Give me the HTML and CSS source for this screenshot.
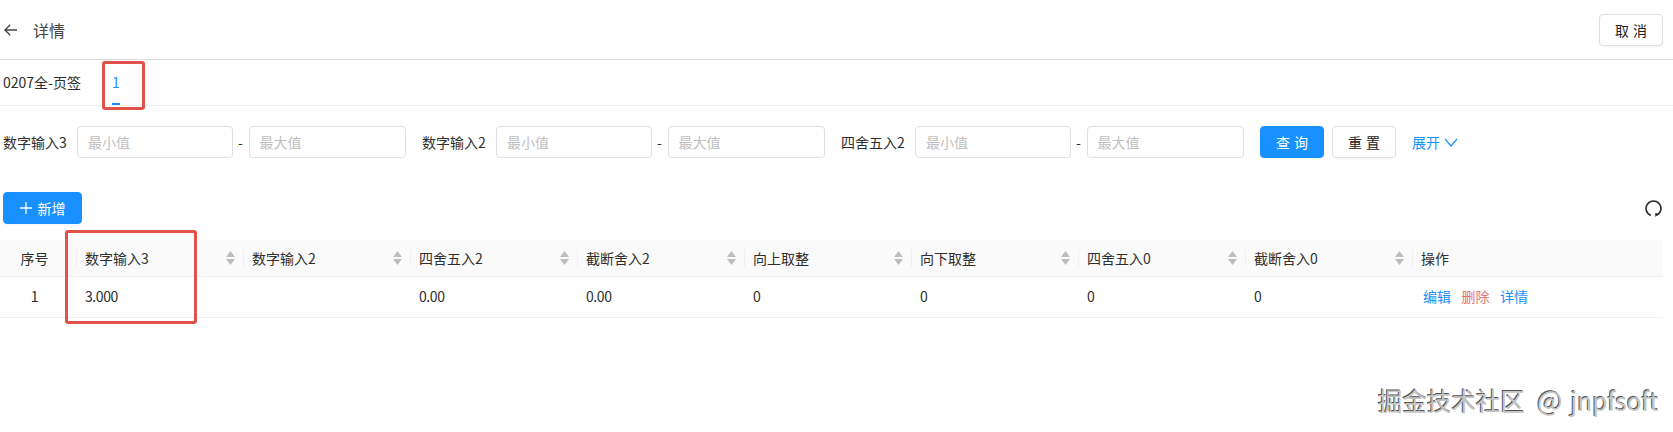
FILE: index.html
```html
<!DOCTYPE html>
<html lang="zh-CN">
<head>
<meta charset="utf-8">
<title>详情</title>
<link rel="stylesheet" href="styles.css">
</head>
<body>
<div class="page">
  <header class="head">
    <div class="head-left">
      <svg class="back" viewBox="0 0 13 12" width="13" height="12"><path d="M13 6H1.2M6.2 .8 1 6l5.2 5.2" fill="none" stroke="#444" stroke-width="1.3"/></svg>
      <span class="title">详情</span>
    </div>
    <button class="btn">取 消</button>
  </header>
  <nav class="tabs">
    <span class="tab">0207全-页签</span>
    <span class="tab active">1</span>
  </nav>
  <form class="filter">
    <div class="group"><label>数字输入3</label><span class="range"><input placeholder="最小值"><i>-</i><input placeholder="最大值"></span></div>
    <div class="group"><label>数字输入2</label><span class="range"><input placeholder="最小值"><i>-</i><input placeholder="最大值"></span></div>
    <div class="group"><label>四舍五入2</label><span class="range"><input placeholder="最小值"><i>-</i><input placeholder="最大值"></span></div>
    <div class="actions">
      <button type="button" class="btn primary">查 询</button>
      <button type="button" class="btn">重 置</button>
      <a class="link expand">展开<svg viewBox="0 0 14 9" width="14" height="9"><path d="M1 1l6 7 6-7" fill="none" stroke="#1890ff" stroke-width="1.2"/></svg></a>
    </div>
  </form>
  <div class="toolbar">
    <button class="btn primary add"><svg viewBox="0 0 12 12" width="12" height="12"><path d="M6 0v12M0 6h12" stroke="#fff" stroke-width="1.3"/></svg>新增</button>
    <svg class="refresh" viewBox="0 0 16 16" width="17" height="17"><path d="M5.5 14.5A7 7 0 1 1 10.5 14.5" fill="none" stroke="#333" stroke-width="1.6"/><path d="M9.6 16v-3.6h3.4z" fill="#333"/></svg>
  </div>
  <table class="grid">
    <colgroup>
      <col class="c-idx"><col class="c"><col class="c"><col class="c"><col class="c"><col class="c"><col class="c"><col class="c"><col class="c"><col>
    </colgroup>
    <thead>
      <tr>
        <th class="center">序号</th>
        <th class="sort">数字输入3</th>
        <th class="sort">数字输入2</th>
        <th class="sort">四舍五入2</th>
        <th class="sort">截断舍入2</th>
        <th class="sort">向上取整</th>
        <th class="sort">向下取整</th>
        <th class="sort">四舍五入0</th>
        <th class="sort">截断舍入0</th>
        <th>操作</th>
      </tr>
    </thead>
    <tbody>
      <tr>
        <td class="center">1</td>
        <td>3.000</td>
        <td></td>
        <td>0.00</td>
        <td>0.00</td>
        <td>0</td>
        <td>0</td>
        <td>0</td>
        <td>0</td>
        <td class="ops"><a class="link">编辑</a><a class="link danger">删除</a><a class="link">详情</a></td>
      </tr>
    </tbody>
  </table>
  <div class="mark mark-tab"></div>
  <div class="mark mark-col"></div>
  <div class="watermark">掘金技术社区<span class="wm-at">@</span><span class="wm-name">jnpfsoft</span></div>
</div>
</body>
</html>
```
FILE: styles.css
```css
* { box-sizing: border-box; }
html, body { margin: 0; padding: 0; background: #fff; }
body { font-family: "Noto Sans CJK SC", "Open Sans", sans-serif; font-size: 14px; color: #2e2e2e; }
.page { position: relative; width: 1673px; height: 432px; overflow: hidden; }

.head { display: flex; justify-content: space-between; align-items: center; height: 60px; padding: 0 10px 0 4px; border-bottom: 1px solid #dcdcdc; }
.head-left { display: flex; align-items: center; gap: 16px; }
.back { display: block; }
.title { font-size: 16px; color: #444; }

.btn { height: 32px; width: 64px; padding: 0; border: 1px solid #dcdfe6; border-radius: 4px; background: #fff; color: #222; font: inherit; font-size: 14px; line-height: 30px; word-spacing: 1px; box-shadow: 0 1px 2px rgba(0,0,0,.04); }
.btn.primary { background: #1890ff; border-color: #1890ff; color: #fff; }

.tabs { display: flex; height: 46px; padding-left: 3px; border-bottom: 1px solid #f0f0f0; }
.tab { line-height: 44px; margin-right: 31px; position: relative; }
.tab.active { color: #1890ff; }
.tab.active::after { content: ""; position: absolute; left: 0; right: 0; bottom: 0; height: 2px; background: #1890ff; }

.filter { display: flex; align-items: center; padding: 20px 0 0 3px; height: 52px; }
.group { display: flex; align-items: center; margin-right: 16.5px; }
.group label { width: 64px; margin-right: 10px; white-space: nowrap; }
.range { display: flex; align-items: center; }
.range i { width: 16px; text-align: center; font-style: normal; }
.range input { width: 157px; height: 32px; padding: 0 10px; border: 1px solid #dcdfe6; border-radius: 4px; font: inherit; font-size: 14px; color: #333; background: #fff; outline: none; }
.range input:first-child { width: 155.5px; }
.range input::placeholder { color: #bfbfbf; }
.actions { display: flex; align-items: center; gap: 8px; }
.link { color: #1890ff; }
.expand { display: flex; align-items: center; gap: 4px; margin-left: 8px; }

.toolbar { display: flex; justify-content: space-between; align-items: center; height: 32px; margin-top: 34px; padding: 0 11px 0 3px; }
.add { display: flex; align-items: center; justify-content: center; gap: 6px; width: 79px; }
.refresh { display: block; }

.grid { table-layout: fixed; width: 1663px; margin-top: 16px; border-collapse: collapse; }
.c-idx { width: 77px; }
.c { width: 167px; }
.grid th { position: relative; height: 36px; padding: 0 8px; background: #fafafa; border-bottom: 1px solid #f0f0f0; text-align: left; font-weight: 400; white-space: nowrap; }
.grid td { height: 41px; padding: 0 8px 2px; border-bottom: 1px solid #f0f0f0; letter-spacing: -.4px; }
.grid .center { text-align: center; }
.grid th.center, .grid td.center { padding-left: 0; }
.grid th:not(:last-child)::before { content: ""; position: absolute; right: 0; top: 9px; bottom: 9px; width: 1px; background: #f0f0f0; }
.grid th.sort::after { content: ""; position: absolute; right: 9px; top: 11px; width: 9px; height: 14px; background: #bdbdbd; clip-path: polygon(50% 0, 100% 43%, 0 43%, 0 57%, 100% 57%, 50% 100%, 0 57%, 0 43%); }
.grid td.ops { padding-left: 10px; letter-spacing: 0; }
.grid td .link { margin-right: 10.5px; }
.grid td .danger { color: #e57373; }

.mark { position: absolute; border: 3px solid #e0524a; border-radius: 3px; }
.mark-tab { left: 102px; top: 61px; width: 43px; height: 49px; }
.mark-col { left: 65px; top: 230px; width: 132px; height: 94px; }
.watermark { position: absolute; left: 1378px; top: 382px; font-size: 24.5px; line-height: 36px; white-space: nowrap; color: #c4c4c4; text-shadow: -1px -1px 0 #555, 1px 1px 0 #fff; }
.wm-at { font-size: 27px; margin: 0 8px 0 12px; }
```
